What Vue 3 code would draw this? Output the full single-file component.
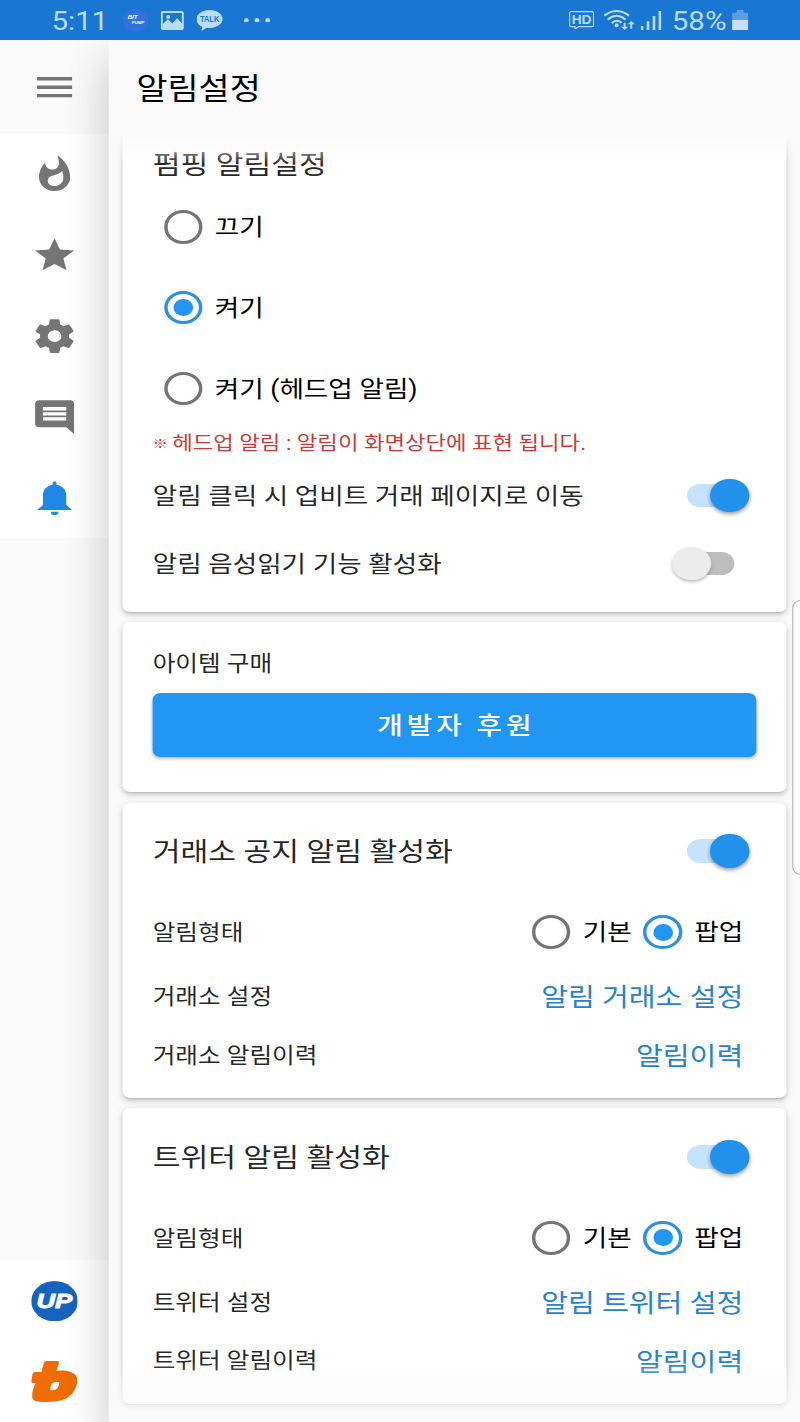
<template>
  <div class="phone">
    <header class="status-bar">
      <span class="clock">5:11</span>
      <svg class="st-bit" viewBox="0 0 26 26" preserveAspectRatio="none">
        <circle cx="13" cy="13" r="12.5" fill="#3571dc" />
        <text x="5" y="12" class="bit-text">BIT</text>
        <text x="9" y="17.5" class="bit-text small">PUMP</text>
      </svg>
      <svg class="st-picture" viewBox="0 0 68 58" preserveAspectRatio="none">
        <path fill-rule="evenodd" d="M6 0h56q6 0 6 6v46q0 6-6 6H6q-6 0-6-6V6q0-6 6-6zM6 6v34l15-15 13 13 14-17 14 17V6zM22 12a6 6 0 1 1 0 12a6 6 0 1 1 0-12z" />
      </svg>
      <svg class="st-talk" viewBox="0 0 78 64" preserveAspectRatio="none">
        <path d="M39 0C17 0 0 12 0 28c0 11 7 19 17 23l-2 13 15-10c3 .5 6 .7 9 .7 22 0 39-12 39-27S61 0 39 0z" />
        <text x="10" y="37" textLength="58" lengthAdjust="spacingAndGlyphs" class="talk-text">TALK</text>
      </svg>
      <svg class="st-dots" viewBox="0 0 78 14" preserveAspectRatio="none">
        <circle cx="7" cy="7" r="7" /><circle cx="39" cy="7" r="7" /><circle cx="71" cy="7" r="7" />
      </svg>
      <div class="status-right">
        <svg class="st-hd" viewBox="0 0 76 56" preserveAspectRatio="none">
          <path d="M7 2h62q5 0 5 5v35q0 5-5 5H30l-12 7v-7H7q-5 0-5-5V7q0-5 5-5z" fill="none" stroke="#b9dcf8" stroke-width="3.5" />
          <text x="8" y="38" textLength="60" lengthAdjust="spacingAndGlyphs" class="hd-text">HD</text>
        </svg>
        <svg class="st-wifi" viewBox="0 0 94 60" preserveAspectRatio="none">
          <g fill="none" stroke="#b9dcf8" stroke-width="6">
            <path d="M2 17Q39-11 76 17" />
            <path d="M12 29Q39 6 66 29" />
            <path d="M24 40Q39 26 54 38" />
          </g>
          <circle cx="39" cy="46" r="6" />
          <path d="M60 38h6v12h8L63 60 52 50h8zM80 56h6V43h8L83 33 72 43h8z" />
        </svg>
        <svg class="st-signal" viewBox="0 0 62 56" preserveAspectRatio="none">
          <path d="M0 44h8v12H0zM18 30h8v26h-8zM36 15h8v41h-8zM54 0h8v56h-8z" />
        </svg>
        <span class="percent">58%</span>
        <svg class="st-battery" viewBox="0 0 48 62" preserveAspectRatio="none">
          <path d="M14 0h20v8h10q4 0 4 4v19H0V12q0-4 4-4h10z" opacity=".4" />
          <path d="M0 30h48v28q0 4-4 4H4q-4 0-4-4z" fill="#c8def6" />
        </svg>
      </div>
    </header>

    <div class="body">
      <aside class="sidebar">
        <div class="menu-btn">
          <svg class="icon" viewBox="0 0 24 24"><path d="M3 6h18v2H3zm0 5h18v2H3zm0 5h18v2H3z" /></svg>
        </div>
        <nav class="nav">
          <a
              v-for="item in navItems"
              :key="item.name"
              class="nav-item"
              :class="{ active: item.name === activeNav }"
              @click="activeNav = item.name"
          >
            <svg class="icon" viewBox="0 0 24 24"><path :d="item.path" /></svg>
          </a>
        </nav>
        <div class="exchanges">
          <a class="nav-item">
            <svg class="upbit" viewBox="0 0 40 40">
              <circle cx="20" cy="20" r="20" fill="#1565c0" />
              <text x="4.5" y="27" textLength="30.5" lengthAdjust="spacingAndGlyphs" class="up-text">UP</text>
            </svg>
          </a>
          <a class="nav-item">
            <svg class="bithumb" viewBox="0 0 138 123" preserveAspectRatio="none">
              <path fill="#ef6c00" fill-rule="evenodd" d="M46 0h32q6 0 5 6l-7 24c14-2 28-2 40 2 16 5 23 14 22 28-1 18-10 35-28 49-18 13-48 15-84 13C12 121 4 118 3 108c-1-14 3-26 10-42H5q-6 0-5-7l4-20q1-6 8-6h18l8-27q2-6 8-6zM66 65c-6 3-9 13-9 22 11 3 19-1 23-8 3-5 4-11 4-16-6 0-12 0-18 2z" />
            </svg>
          </a>
        </div>
      </aside>

      <main class="main">
        <div class="toolbar">알림설정</div>
        <div class="content">
          <section class="card card-pump">
            <h2 class="head pump-head">펌핑 알림설정</h2>
            <label v-for="(opt, i) in pumpOptions" :key="i" class="radio-row" @click="pump = i">
              <span class="radio" :class="{ on: pump === i }"></span>
              <span class="radio-label">{{ opt }}</span>
            </label>
            <p class="notice"><span class="mark">※</span> 헤드업 알림 : 알림이 화면상단에 표현 됩니다.</p>
            <div class="switch-row" v-for="sw in switches" :key="sw.text">
              <span class="switch-text">{{ sw.text }}</span>
              <span class="switch" :class="{ on: sw.on }" @click="sw.on = !sw.on"></span>
            </div>
          </section>

          <section class="card card-item">
            <div class="item-title">아이템 구매</div>
            <button class="donate">개발자 후원</button>
          </section>

          <section class="card card-alarm" v-for="alarm in alarms" :key="alarm.name">
            <div class="alarm-head">
              <h2 class="head">{{ alarm.title }}</h2>
              <span class="switch" :class="{ on: alarm.on }" @click="alarm.on = !alarm.on"></span>
            </div>
            <div class="type-row">
              <span class="type-title">알림형태</span>
              <div class="types">
                <label v-for="t in types" :key="t" class="type" @click="alarm.type = t">
                  <span class="radio" :class="{ on: alarm.type === t }"></span>
                  <span class="radio-label">{{ t }}</span>
                </label>
              </div>
            </div>
            <div class="link-row">
              <span>{{ alarm.name }} 설정</span>
              <a class="link">알림 {{ alarm.name }} 설정</a>
            </div>
            <div class="link-row">
              <span>{{ alarm.name }} 알림이력</span>
              <a class="link">알림이력</a>
            </div>
          </section>
        </div>
        <div class="scroll-thumb"></div>
      </main>
    </div>
  </div>
</template>

<script setup>
import {ref} from "vue";

const activeNav = ref("bell");

const navItems = [
  {name: "fire", path: "M13.5.67s.74 2.65.74 4.8c0 2.06-1.35 3.73-3.41 3.73-2.07 0-3.63-1.67-3.63-3.73l.03-.36C5.21 7.51 4 10.62 4 14c0 4.42 3.58 8 8 8s8-3.58 8-8C20 8.61 17.41 3.8 13.5.67zM11.71 19c-1.78 0-3.22-1.4-3.22-3.14 0-1.62 1.05-2.76 2.81-3.12 1.77-.36 3.6-1.21 4.62-2.58.39 1.29.59 2.65.59 4.04 0 2.65-2.15 4.8-4.8 4.8z"},
  {name: "star", path: "M12 17.27L18.18 21l-1.64-7.03L22 9.24l-7.19-.61L12 2 9.19 8.63 2 9.24l5.46 4.73L5.82 21z"},
  {name: "settings", path: "M12 15.5A3.5 3.5 0 0 1 8.5 12 3.5 3.5 0 0 1 12 8.5a3.5 3.5 0 0 1 3.5 3.5 3.5 3.5 0 0 1-3.5 3.5m7.43-2.53c.04-.32.07-.64.07-.97s-.03-.66-.07-1l2.11-1.63c.19-.15.24-.42.12-.64l-2-3.46c-.12-.22-.39-.31-.61-.22l-2.49 1c-.52-.39-1.06-.73-1.69-.98l-.37-2.65A.506.506 0 0 0 14 2h-4c-.25 0-.46.18-.5.42l-.37 2.65c-.63.25-1.17.59-1.69.98l-2.49-1c-.22-.09-.49 0-.61.22l-2 3.46c-.13.22-.07.49.12.64L4.57 11c-.04.34-.07.67-.07 1s.03.65.07.97l-2.11 1.66c-.19.15-.25.42-.12.64l2 3.46c.12.22.39.3.61.22l2.49-1.01c.52.4 1.06.74 1.69.99l.37 2.65c.04.24.25.42.5.42h4c.25 0 .46-.18.5-.42l.37-2.65c.63-.26 1.17-.59 1.69-.99l2.49 1.01c.22.08.49 0 .61-.22l2-3.46c.12-.22.07-.49-.12-.64z"},
  {name: "comment", path: "M21.99 4c0-1.1-.89-2-1.99-2H4c-1.1 0-2 .9-2 2v12c0 1.1.9 2 2 2h14l4 4zM18 14H6v-2h12zm0-3H6V9h12zm0-3H6V6h12z"},
  {name: "bell", path: "M14 20a2 2 0 0 1-4 0zM12 2a1 1 0 0 1 1 1v1.08c2.84.48 5 2.95 5 5.92v6l3 3H3l3-3v-6c0-2.97 2.16-5.44 5-5.92V3a1 1 0 0 1 1-1z"},
];

const pump = ref(1);
const pumpOptions = ["끄기", "켜기", "켜기 (헤드업 알림)"];

const switches = ref([
  {text: "알림 클릭 시 업비트 거래 페이지로 이동", on: true},
  {text: "알림 음성읽기 기능 활성화", on: false},
]);

const types = ["기본", "팝업"];
const alarms = ref([
  {name: "거래소", title: "거래소 공지 알림 활성화", on: true, type: "팝업"},
  {name: "트위터", title: "트위터 알림 활성화", on: true, type: "팝업"},
]);
</script>

<style>
body {
  margin: 0;
  overflow: hidden;
  background: #fafafa;
}
</style>

<style scoped>
/* the whole screen is stretched horizontally */
.phone {
  width: 691.74px;
  height: 1422px;
  transform: scaleX(1.1565);
  transform-origin: 0 0;
  overflow: hidden;
  display: flex;
  flex-direction: column;
  background: #fafafa;
  color: rgba(0, 0, 0, 0.87);
  font-family: Roboto, "Noto Sans CJK KR", sans-serif;
  line-height: 1.2;
}

.status-bar {
  position: relative;
  z-index: 3;
  height: 40px;
  flex-shrink: 0;
  display: flex;
  align-items: center;
  box-sizing: border-box;
  padding: 0 44.5px 0 44.5px;
  background: #1976d2;
  color: #b9dcf8;
  fill: #b9dcf8;
}

.clock,
.percent {
  font-size: 25.5px;
  line-height: 40px;
  padding-top: 1px;
}

.clock {
  width: 61px;
}

.st-bit {
  width: 23px;
  height: 24px;
}

.bit-text {
  font: italic bold 6px "Liberation Sans", sans-serif;
  fill: #fff;
}

.bit-text.small {
  font-size: 4.2px;
}

.st-picture {
  width: 20px;
  height: 19px;
  margin-left: 10.7px;
}

.st-talk {
  width: 22.5px;
  height: 21px;
  margin-left: 11.3px;
}

.talk-text {
  font: bold 26px "Liberation Sans", sans-serif;
  fill: #1976d2;
}

.st-dots {
  width: 22.5px;
  height: 4.7px;
  margin-left: 18.5px;
}

.status-right {
  margin-left: auto;
  display: flex;
  align-items: center;
}

.st-hd {
  width: 21.8px;
  height: 18.6px;
}

.hd-text {
  font: bold 38px "Liberation Sans", sans-serif;
}

.st-wifi {
  width: 27px;
  height: 20px;
  margin-left: 7.6px;
}

.st-signal {
  width: 17.8px;
  height: 19px;
  margin: 1px 0 0 5.5px;
}

.percent {
  margin-left: 9px;
}

.st-battery {
  width: 14px;
  height: 20.5px;
  margin-left: 5px;
}

.body {
  flex: 1;
  min-height: 0;
  display: flex;
}

.sidebar {
  width: 94px;
  flex-shrink: 0;
  display: flex;
  flex-direction: column;
}

.menu-btn {
  height: 94.2px;
  display: flex;
  align-items: center;
  justify-content: center;
}

.icon {
  width: 40.4px;
  height: 40.4px;
  fill: #757575;
}

.nav,
.exchanges {
  background: #fff;
}

.exchanges {
  margin-top: auto;
}

.nav-item {
  height: 80.8px;
  display: flex;
  align-items: center;
  justify-content: center;
}

.active .icon {
  fill: #1e88e5;
}

.upbit {
  width: 40.4px;
  height: 40.4px;
}

.up-text {
  font: italic bold 20px "Liberation Sans", sans-serif;
  fill: #fff;
  stroke: #fff;
  stroke-width: 0.9;
}

.bithumb {
  width: 39.8px;
  height: 41px;
}

.main {
  position: relative;
  z-index: 1;
  flex: 1;
  min-width: 0;
  display: flex;
  flex-direction: column;
  background: #fafafa;
  box-shadow: 0 27px 38px 2px rgba(0, 0, 0, 0.13), 0 10px 40px 4px rgba(0, 0, 0, 0.07);
}

.toolbar {
  height: 94px;
  line-height: 98px;
  flex-shrink: 0;
  padding-left: 24px;
  font-size: 29.2px;
  color: #000;
}

.content {
  position: relative;
  flex: 1;
  min-height: 0;
  overflow: hidden;
  padding: 0 11.7px 0 12px;
}

.content::before,
.content::after {
  content: "";
  position: absolute;
  left: 0;
  right: 0;
  z-index: 1;
}

.content::before {
  top: 0;
  height: 30px;
  background: linear-gradient(#fafafa, rgba(250, 250, 250, 0));
}

.content::after {
  bottom: 0;
  height: 60px;
  background: linear-gradient(rgba(250, 250, 250, 0), #fafafa);
}

.card {
  box-sizing: border-box;
  margin-bottom: 10.5px;
  padding: 0 25.8px 0 26px;
  border-radius: 6.7px;
  background: #fff;
  box-shadow: 0 4px 2px -3px rgba(0, 0, 0, 0.12), 0 3px 4px rgba(0, 0, 0, 0.12), 0 1.7px 8.4px rgba(0, 0, 0, 0.09);
}

.card-pump {
  height: 497.5px;
  margin-top: -20px;
  padding-top: 30px;
}

.head {
  margin: 0;
  font-size: 26.1px;
  font-weight: 400;
}

.pump-head {
  height: 42.6px;
  line-height: 42px;
}

.radio-row {
  height: 80.7px;
  padding-left: 9.7px;
  display: flex;
  align-items: center;
}

.radio {
  width: 33.5px;
  height: 33.5px;
  box-sizing: border-box;
  border: 3.8px solid #757575;
  border-radius: 50%;
  display: flex;
  align-items: center;
  justify-content: center;
}

.radio.on {
  border-color: #2b91e6;
}

.radio.on::after {
  content: "";
  width: 17px;
  height: 17px;
  border-radius: 50%;
  background: #2196f3;
}

.radio-label {
  margin-left: 10.5px;
  padding-top: 2px;
  font-size: 23px;
  color: #000;
}

.notice {
  height: 33px;
  line-height: 30px;
  margin: 0;
  font-size: 19.3px;
  color: #cc3a35;
  white-space: nowrap;
}

.mark {
  display: inline-block;
  width: 12.2px;
  font-size: 13px;
  font-weight: 700;
  vertical-align: 1.5px;
  line-height: 1;
}

.switch-row {
  height: 68px;
  display: flex;
  align-items: center;
  justify-content: space-between;
  font-size: 23px;
}

.switch-text {
  padding-top: 2px;
}

.switch {
  position: relative;
  width: 41px;
  height: 23.5px;
  margin-right: 19px;
  border-radius: 12px;
  background: #bdbdbd;
}

.switch::after {
  content: "";
  position: absolute;
  top: -5px;
  left: -13px;
  width: 33.5px;
  height: 33.5px;
  border-radius: 50%;
  background: #ececec;
  box-shadow: 0 2px 3px rgba(0, 0, 0, 0.25);
}

.switch.on {
  background: #c5e3fc;
}

.switch.on::after {
  left: 20.2px;
  background: #2191ec;
  box-shadow: 0 2px 4px rgba(0, 0, 0, 0.4);
}

.card-item {
  height: 170px;
  padding-top: 22px;
}

.item-title {
  height: 49px;
  line-height: 40px;
  font-size: 21.3px;
}

.donate {
  display: block;
  width: 100%;
  height: 63.5px;
  padding: 0 0 3px 3px;
  border: none;
  border-radius: 6.7px;
  background: #2196f3;
  color: #fff;
  font-family: inherit;
  font-size: 24px;
  font-weight: 500;
  letter-spacing: 3.4px;
  box-shadow: 0 2px 3px rgba(0, 0, 0, 0.25);
}

.card-alarm {
  height: 295.3px;
  padding-top: 8px;
}

.alarm-head {
  height: 81px;
  display: flex;
  align-items: center;
  justify-content: space-between;
}

.alarm-head .head {
  padding-top: 4px;
}

.type-row,
.link-row {
  display: flex;
  align-items: center;
  justify-content: space-between;
  padding-right: 11.6px;
  font-size: 21.3px;
}

.type-row {
  height: 71px;
  padding-top: 5px;
}

.type-title {
  padding-top: 2px;
}

.link-row {
  height: 58.6px;
}

.types,
.type {
  display: flex;
  align-items: center;
}

.type + .type {
  margin-left: 10.2px;
}

.link {
  padding-top: 3px;
  font-size: 25.2px;
  color: #2483d0;
}

.scroll-thumb {
  position: absolute;
  top: 560px;
  right: -8px;
  width: 13px;
  height: 273px;
  border: 1px solid #b4b4b4;
  border-radius: 8px;
  background: #fcfcfc;
}
</style>
